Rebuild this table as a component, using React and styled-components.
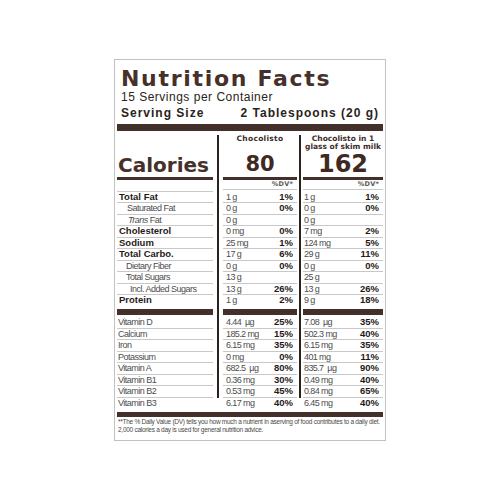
import React from 'react';
import styled, { createGlobalStyle } from 'styled-components';

const GlobalStyle = createGlobalStyle`
  html, body {
    margin: 0;
    padding: 0;
    background: #ffffff;
  }
`;

const Page = styled.div`
  width: 500px;
  height: 500px;
  padding-top: 59px;
  box-sizing: border-box;
  background: #ffffff;
`;

const Label = styled.div`
  width: 272px;
  height: 382px;
  margin: 0 auto;
  box-sizing: border-box;
  border: 1px solid #c2c2c2;
  padding: 1px 2px;
  font-family: 'Liberation Sans', Arial, sans-serif;
  color: #2a2320;
  display: flex;
  flex-direction: column;
  overflow: hidden;
`;

const Title = styled.div`
  margin-top: 7px;
  padding-left: 4px;
  font-family: 'DejaVu Sans', sans-serif;
  font-weight: 700;
  font-size: 22px;
  line-height: 22px;
  letter-spacing: 1.7px;
  color: #46302a;
`;

const Servings = styled.div`
  margin-top: 1px;
  padding-left: 4px;
  font-size: 12px;
  line-height: 13px;
  letter-spacing: 0.5px;
`;

const ServingSize = styled.div`
  display: flex;
  justify-content: space-between;
  margin-top: 3px;
  padding: 0 4px;
  font-size: 12px;
  line-height: 13px;
  font-weight: 700;
  letter-spacing: 1px;
`;

const Bar = styled.div`
  height: ${p => p.$h}px;
  margin-top: ${p => p.$top || 0}px;
  margin-bottom: ${p => p.$bottom || 0}px;
  background: #44302a;
`;

const Row = styled.div`
  display: grid;
  grid-template-columns: 96px 84px 86px;
  margin-top: ${p => p.$top || 0}px;
`;

const NameCell = styled.div`
  height: 10.5px;
  line-height: 10.5px;
  padding-left: ${p => p.$indent}px;
  border-bottom: 1px solid ${p => (p.$line ? '#c8c8c8' : 'transparent')};
  font-size: ${p => (p.$bold ? 9.5 : 9)}px;
  font-weight: ${p => (p.$bold ? 700 : 400)};
  letter-spacing: ${p => (p.$bold ? 0 : -0.5)}px;
  color: ${p => (p.$bold ? '#1f1a18' : '#4d4d4d')};
  white-space: nowrap;
`;

const ColCell = styled.div`
  margin-left: ${p => (p.$wide ? 4 : 2)}px;
  padding-left: ${p => (p.$wide ? 4 : 2)}px;
  border-left: 2px solid ${p => (p.$rule ? '#2b211d' : 'transparent')};
  display: flex;
  flex-direction: column;
  justify-content: space-between;
`;

const Amounts = styled.div`
  display: flex;
  justify-content: space-between;
  height: ${p => p.$h || 10.5}px;
  line-height: ${p => p.$h || 10.5}px;
  padding: 0 4px 0 ${p => (p.$wide ? 3 : 1)}px;
  border-bottom: 1px solid ${p => (p.$line ? '#c8c8c8' : 'transparent')};
  white-space: pre;
`;

const Amount = styled.span`
  font-size: 9px;
  letter-spacing: -0.6px;
  color: #4d4d4d;
`;

const Percent = styled.span`
  font-size: 9.5px;
  font-weight: 700;
  color: #1f1a18;
`;

const DV = styled.span`
  margin-left: auto;
  font-family: 'DejaVu Sans', sans-serif;
  font-size: 6.5px;
  font-weight: 700;
  letter-spacing: 0.2px;
  color: #5a5a5a;
`;

const TopLeft = styled.div`
  display: flex;
  flex-direction: column;
  justify-content: flex-end;
  min-height: 45px;
`;

const Calories = styled.div`
  font-family: 'DejaVu Sans', sans-serif;
  font-weight: 700;
  font-size: 20px;
  line-height: 20px;
  padding: 0 0 2px 1px;
  border-bottom: 3px solid #44302a;
  color: #46302a;
`;

const ColHead = styled.div`
  font-family: 'DejaVu Sans', sans-serif;
  font-weight: 700;
  font-size: 7.5px;
  line-height: 8px;
  letter-spacing: ${p => (p.$tight ? 0 : 0.3)}px;
  text-align: center;
  white-space: nowrap;
  color: #3a2c27;
`;

const BigNumber = styled.div`
  font-family: 'DejaVu Sans', sans-serif;
  font-weight: 700;
  font-size: ${p => p.$size}px;
  line-height: ${p => p.$size}px;
  padding-bottom: ${p => p.$pad}px;
  border-bottom: 3px solid #44302a;
  text-align: center;
  color: #3f2a23;
`;

const Footnote = styled.div`
  margin-top: 1px;
  padding-left: 1px;
  font-size: 6.5px;
  line-height: 8px;
  letter-spacing: -0.27px;
  color: #4a4a4a;
  white-space: nowrap;
`;

const nutrients = [
  { name: 'Total Fat', bold: true, a: '1 g', ap: '1%', b: '1 g', bp: '1%' },
  { name: 'Saturated Fat', indent: 10, a: '0 g', ap: '0%', b: '0 g', bp: '0%' },
  { name: <><i>Trans</i> Fat</>, indent: 11, a: '0 g', ap: '', b: '0 g', bp: '' },
  { name: 'Cholesterol', bold: true, a: '0 mg', ap: '0%', b: '7 mg', bp: '2%' },
  { name: 'Sodium', bold: true, a: '25 mg', ap: '1%', b: '124 mg', bp: '5%' },
  { name: 'Total Carbo.', bold: true, a: '17 g', ap: '6%', b: '29 g', bp: '11%' },
  { name: 'Dietary Fiber', indent: 9, a: '0 g', ap: '0%', b: '0 g', bp: '0%' },
  { name: 'Total Sugars', indent: 9, a: '13 g', ap: '', b: '25 g', bp: '' },
  { name: 'Incl. Added Sugars', indent: 13, a: '13 g', ap: '26%', b: '13 g', bp: '26%' },
  { name: 'Protein', bold: true, a: '1 g', ap: '2%', b: '9 g', bp: '18%', last: true },
];

const vitamins = [
  { name: 'Vitamin D', a: '4.44  µg', ap: '25%', b: '7.08  µg', bp: '35%' },
  { name: 'Calcium', a: '185.2 mg', ap: '15%', b: '502.3 mg', bp: '40%' },
  { name: 'Iron', a: '6.15 mg', ap: '35%', b: '6.15 mg', bp: '35%' },
  { name: 'Potassium', a: '0 mg', ap: '0%', b: '401 mg', bp: '11%' },
  { name: 'Vitamin A', a: '682.5  µg', ap: '80%', b: '835.7  µg', bp: '90%' },
  { name: 'Vitamin B1', a: '0.36 mg', ap: '30%', b: '0.49 mg', bp: '40%' },
  { name: 'Vitamin B2', a: '0.53 mg', ap: '45%', b: '0.84 mg', bp: '65%' },
  { name: 'Vitamin B3', a: '6.17 mg', ap: '40%', b: '6.45 mg', bp: '40%', last: true, open: true },
];

function NutrientRow({ item, line }) {
  const rule = !item.open;
  return (
    <Row>
      <NameCell $bold={item.bold} $indent={item.indent || (item.bold ? 2 : 1)} $line={line}>
        {item.name}
      </NameCell>
      <ColCell $wide $rule={rule}>
        <Amounts $wide $line={line}>
          <Amount>{item.a}</Amount>
          <Percent>{item.ap}</Percent>
        </Amounts>
      </ColCell>
      <ColCell $rule={rule}>
        <Amounts $line={line}>
          <Amount>{item.b}</Amount>
          <Percent>{item.bp}</Percent>
        </Amounts>
      </ColCell>
    </Row>
  );
}

export default function App() {
  return (
    <Page>
      <GlobalStyle />
      <Label>
        <Title>Nutrition Facts</Title>
        <Servings>15 Servings per Container</Servings>
        <ServingSize>
          <span>Serving Size</span>
          <span>2 Tablespoons (20 g)</span>
        </ServingSize>
        <Bar $h={7} $top={4} />

        <Row $top={4}>
          <TopLeft>
            <Calories>Calories</Calories>
          </TopLeft>
          <ColCell $wide $rule>
            <ColHead>Chocolisto</ColHead>
            <BigNumber $size={21} $pad={2}>80</BigNumber>
          </ColCell>
          <ColCell $rule>
            <ColHead $tight>
              Chocolisto in 1<br />glass of skim milk
            </ColHead>
            <BigNumber $size={24} $pad={1.5}>162</BigNumber>
          </ColCell>
        </Row>

        <Row>
          <NameCell $line />
          <ColCell $wide $rule>
            <Amounts $wide $line $h={9}>
              <DV>%DV*</DV>
            </Amounts>
          </ColCell>
          <ColCell $rule>
            <Amounts $line $h={9}>
              <DV>%DV*</DV>
            </Amounts>
          </ColCell>
        </Row>

        {nutrients.map((item, i) => (
          <NutrientRow key={i} item={item} line={!item.last} />
        ))}

        <Row>
          <Bar $h={6} $top={2} $bottom={2.5} />
          <ColCell $wide $rule>
            <Bar $h={6} $top={2} $bottom={2.5} />
          </ColCell>
          <ColCell $rule>
            <Bar $h={6} $top={2} $bottom={2.5} />
          </ColCell>
        </Row>

        {vitamins.map((item, i) => (
          <NutrientRow key={i} item={item} line={!item.last} />
        ))}

        <Bar $h={5} $top={3} />
        <Footnote>
          **The % Daily Value (DV) tells you how much a nutrient in aserving of food contributes to a daily diet.
          <br />
          2,000 calories a day is used for general nutrition advice.
        </Footnote>
      </Label>
    </Page>
  );
}
